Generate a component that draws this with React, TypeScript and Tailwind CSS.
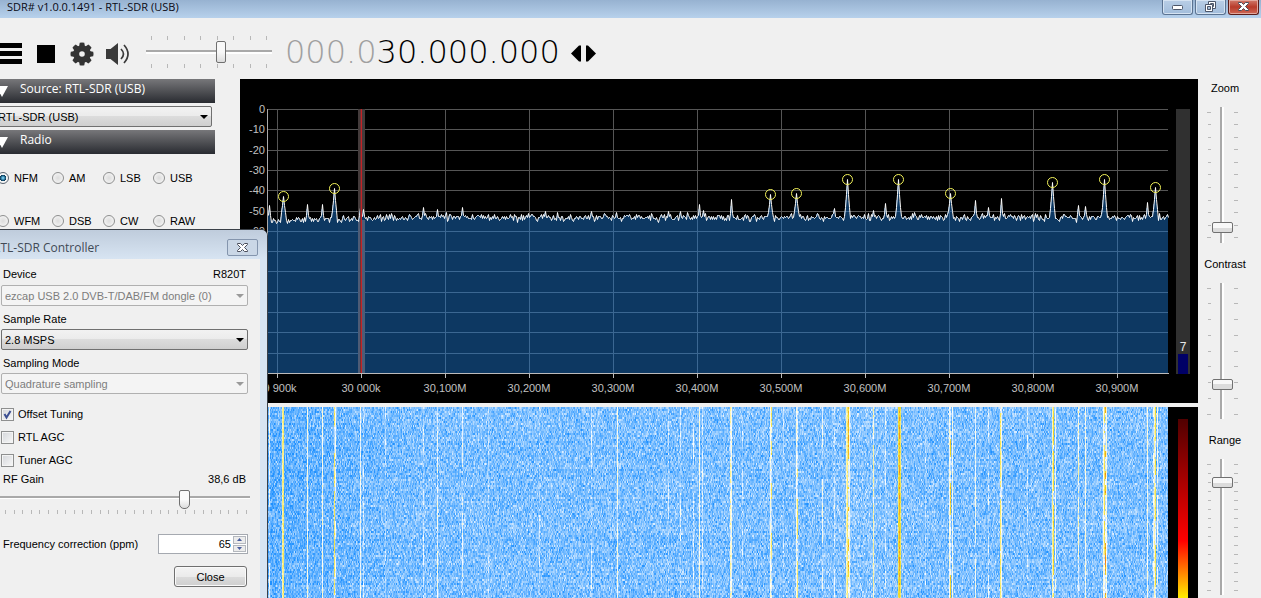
import { useLayoutEffect, useRef, useState } from 'react';
import type { ReactNode, RefObject } from 'react';

const UI = "font-['Liberation_Sans',Arial,sans-serif] text-[11px] leading-[14px]";

const PLOT_LEFT = 28;
const PLOT_RIGHT = 30;
const PLOT_SPAN = 900;
const PLOT_TOP = 30;
const PLOT_BOTTOM = 294;

// x offset inside the plot, y of the tip, whether the peak is marked
const PEAKS: [number, number, boolean][] = [
  [1, 126, false], [15, 117, true], [39, 125, false], [54, 125, false], [66, 109, true],
  [92, 128, false], [95, 130, false], [155, 128, false], [169, 130, false], [194, 128, false],
  [277, 132, false], [323, 132, false], [348, 133, false], [400, 132, false], [412, 132, false],
  [431, 125, false], [435, 131, false], [463, 120, false], [502, 115, true], [528, 114, true],
  [566, 129, false], [579, 100, true], [605, 131, false], [617, 124, false], [630, 100, true],
  [682, 114, true], [707, 121, false], [720, 128, false], [733, 119, false], [784, 103, true],
  [810, 126, false], [817, 127, false], [836, 100, true], [879, 123, false], [887, 108, true],
];

const FREQUENCIES = [
  '29 900k', '30 000k', '30,100M', '30,200M', '30,300M', '30,400M',
  '30,500M', '30,600M', '30,700M', '30,800M', '30,900M',
];

// x offset, strength (1 = white, 2 = yellow, 3 = red), share of rows in which it shows
const CARRIERS: [number, number, number][] = [
  [1, 0.95, 0.8], [14, 1.4, 1], [15, 1.65, 1], [39, 1.05, 1], [54, 1.05, 1], [66, 1.7, 0.75],
  [67, 1, 0.6], [92, 1, 0.85], [95, 0.8, 0.6], [117, 0.75, 0.3], [155, 0.85, 0.6],
  [169, 1.05, 0.6], [194, 0.95, 0.7], [220, 0.75, 0.25], [271, 0.85, 0.4], [323, 0.85, 0.4],
  [349, 1.05, 0.95], [400, 0.85, 0.4], [412, 0.85, 0.4], [425, 0.85, 0.4], [431, 1.05, 1],
  [434, 0.85, 0.75], [462, 1.3, 0.6], [463, 1.05, 1], [474, 0.8, 0.35], [502, 1.05, 1],
  [503, 1.7, 0.45], [515, 0.8, 0.3], [528, 1.05, 1], [529, 1.65, 0.55], [554, 1, 0.65],
  [566, 0.85, 0.45], [578, 1.3, 1], [579, 1.6, 1], [580, 2.1, 0.5], [581, 1.05, 1],
  [605, 1.35, 0.8], [617, 0.85, 0.5], [630, 1.85, 1], [631, 2.15, 1], [632, 1.75, 1],
  [657, 0.8, 0.3], [681, 1.05, 1], [682, 2, 0.5], [684, 1.05, 0.9], [707, 1, 0.9],
  [720, 0.85, 0.35], [732, 1.65, 0.7], [733, 1.05, 0.8], [759, 0.85, 0.35], [784, 1.35, 1],
  [785, 1.9, 0.8], [787, 1, 0.9], [810, 1.2, 0.75], [817, 1.05, 1], [835, 1.1, 1],
  [836, 1.8, 0.7], [837, 2.2, 0.5], [838, 1.1, 1], [879, 1.05, 1], [885, 0.95, 0.5],
  [886, 1.3, 0.9], [887, 1.8, 0.6], [889, 1, 0.9],
];

function createRandom(seed: number) {
  let s = seed;
  return () => {
    s = (s + 0x6d2b79f5) | 0;
    let t = Math.imul(s ^ (s >>> 15), 1 | s);
    t = (t + Math.imul(t ^ (t >>> 7), 61 | t)) ^ t;
    return ((t ^ (t >>> 14)) >>> 0) / 4294967296;
  };
}

function useSize(ref: RefObject<HTMLDivElement | null>) {
  const [size, setSize] = useState({ width: 0, height: 0 });
  useLayoutEffect(() => {
    const el = ref.current;
    if (!el) return;
    const update = () => setSize({ width: el.clientWidth, height: el.clientHeight });
    update();
    const observer = new ResizeObserver(update);
    observer.observe(el);
    return () => observer.disconnect();
  }, [ref]);
  return size;
}

const TRACE: number[] = (() => {
  const random = createRandom(11);
  const ys: number[] = [];
  for (let i = 0; i <= PLOT_SPAN; i++) {
    const base = i < 24 ? 142 : i < 95 ? 140 : i < 150 ? 139 : 138;
    ys.push(Math.round(base + (random() + random() + random() - 1.5) * 3.6));
  }
  for (const [x, tip, marked] of PEAKS) {
    const depth = 140 - tip;
    const shape = marked ? [1, 0.62, 0.3] : [1, 0.3];
    shape.forEach((share, d) => {
      for (const at of [x - d, x + d]) {
        if (at >= 0 && at <= PLOT_SPAN) ys[at] = Math.min(ys[at], Math.round(140 - depth * share));
      }
    });
  }
  return ys;
})();

function Spectrum() {
  const ref = useRef<HTMLDivElement>(null);
  const { width } = useSize(ref);
  const right = Math.max(width - PLOT_RIGHT, PLOT_LEFT);
  const scale = (right - PLOT_LEFT) / PLOT_SPAN;
  const px = (x: number) => Math.round(PLOT_LEFT + x * scale);
  const points = TRACE.map((y, i) => `${px(i)},${y}`).join(' ');
  const area = `${PLOT_LEFT},${PLOT_BOTTOM} ${points} ${right},${PLOT_BOTTOM}`;
  const grid = (
    <>
      {Array.from({ length: 13 }, (_, i) => {
        const y = Math.round(PLOT_TOP + (i * 264) / 13);
        return <rect key={`h${i}`} x={PLOT_LEFT} y={y} width={right - PLOT_LEFT} height="1" />;
      })}
      {FREQUENCIES.map((f, i) => (
        <rect key={f} x={px(9 + i * 84)} y={PLOT_TOP} width="1" height={PLOT_BOTTOM - PLOT_TOP} />
      ))}
    </>
  );
  return (
    <div ref={ref} className="h-[324px] shrink-0 bg-black">
      {width > 0 && (
        <svg width={width} height="324" className="block font-['Liberation_Sans',Arial,sans-serif] text-[11px]">
          <defs>
            <clipPath id="signal">
              <polygon points={area} />
            </clipPath>
          </defs>
          <g shapeRendering="crispEdges">
            <g fill="#555">{grid}</g>
            <rect x={px(90)} y={PLOT_TOP} width="7" height={PLOT_BOTTOM - PLOT_TOP} fill="#433b3b" />
            <polygon points={area} fill="#0d3862" />
            <g fill="#3b6792" clipPath="url(#signal)">{grid}</g>
            <rect x={px(90)} y="141" width="7" height={PLOT_BOTTOM - 141} fill="#4d5c76" />
            <rect x={PLOT_LEFT - 1} y={PLOT_TOP} width="1" height={PLOT_BOTTOM - PLOT_TOP} fill="#aaa" />
            <rect x={PLOT_LEFT - 1} y={PLOT_BOTTOM} width={right - PLOT_LEFT + 2} height="1" fill="#bbb" />
            {FREQUENCIES.map((f, i) => (
              <rect key={f} x={px(9 + i * 84)} y={PLOT_BOTTOM} width="1" height="5" fill="#bbb" />
            ))}
          </g>
          <polyline points={points} fill="none" stroke="#fff" strokeWidth="1" transform="translate(0.5 0.5)" />
          <rect x={px(92)} y={PLOT_TOP} width="1" height={PLOT_BOTTOM - PLOT_TOP} fill="#6e3335" />
          <rect x={px(93)} y={PLOT_TOP} width="1" height={PLOT_BOTTOM - PLOT_TOP} fill="#c42226" />
          {PEAKS.filter((p) => p[2]).map(([x, y]) => (
            <circle key={x} cx={px(x) + 0.5} cy={y + 0.5} r="5" fill="none" stroke="#f3f35a" strokeWidth="1" />
          ))}
          <g fill="#c0c0c0" textAnchor="end">
            {[0, -10, -20, -30, -40, -50, -60].map((v, i) => (
              <text key={v} x="25" y={Math.round(34 + (i * 264) / 13)}>{v}</text>
            ))}
          </g>
          <g fill="#c0c0c0" textAnchor="middle">
            {FREQUENCIES.map((f, i) => (
              <text key={f} x={px(9 + i * 84)} y="313">{f}</text>
            ))}
          </g>
          <rect x={width - 22} y={PLOT_TOP} width="14" height="265" fill="#303030" />
          <rect x={width - 20} y="275" width="10" height="20" fill="#000066" />
          <text x={width - 15} y="272" fill="#e8e8e8" textAnchor="middle" className="text-[12px]">7</text>
        </svg>
      )}
    </div>
  );
}

function levelColor(v: number): [number, number, number] {
  if (v < 1) {
    const t = Math.max(v, 0);
    return [30 + 225 * t, 144 + 111 * t, 255];
  }
  if (v < 2) {
    const t = v - 1;
    return [255 - 16 * t, 255 - 35 * t, 245 - 205 * t];
  }
  const t = Math.min(v - 2, 1);
  return [239, 220 - 220 * t, 40 - 40 * t];
}

function Waterfall() {
  const ref = useRef<HTMLDivElement>(null);
  const canvasRef = useRef<HTMLCanvasElement>(null);
  const { width, height } = useSize(ref);

  useLayoutEffect(() => {
    const ctx = canvasRef.current?.getContext('2d');
    if (!ctx || !width || !height) return;
    const random = createRandom(5);
    const image = ctx.createImageData(width, height);
    const carriers = new Map<number, { level: number; share: number; on: boolean; left: number }>();
    for (const [x, level, share] of CARRIERS) {
      carriers.set(Math.round((x * width) / PLOT_SPAN), { level, share, on: true, left: 0 });
    }
    for (let row = 0; row < height; row += 2) {
      const shift = (random() - 0.5) * 0.09;
      for (let x = 0; x < width; x++) {
        const u = x / width;
        const trend = 0.28 + 0.14 * Math.min(u * 6, 1) + 0.05 * Math.exp(-(((u - 0.66) / 0.04) ** 2));
        let v = trend + shift + (random() + random() + random() - 1.5) * 0.33;
        const c = carriers.get(x);
        if (c) {
          if (c.left <= 0) {
            c.on = random() < c.share;
            c.left = 1 + Math.floor(random() * 9);
          }
          c.left--;
          if (c.on) v = c.level + (random() - 0.5) * 0.45;
          else v += c.level > 1 ? 0.4 : 0.15;
        }
        const [r, g, b] = levelColor(v);
        for (let y = row; y < Math.min(row + 2, height); y++) {
          const o = (y * width + x) * 4;
          image.data[o] = r;
          image.data[o + 1] = g;
          image.data[o + 2] = b;
          image.data[o + 3] = 255;
        }
      }
    }
    ctx.putImageData(image, 0, 0);
  }, [width, height]);

  return (
    <div className="flex min-h-0 flex-1 bg-black pl-7">
      <div ref={ref} className="min-w-0 flex-1 overflow-hidden">
        <canvas ref={canvasRef} width={width} height={height} className="block" />
      </div>
      <div className="flex w-[30px] justify-center pt-3">
        <div className="h-full w-[10px] bg-[linear-gradient(#500000,#ff0000_68%,#ffee00)]" />
      </div>
    </div>
  );
}

function Ticks({ count, vertical = false, ends = false }: { count: number; vertical?: boolean; ends?: boolean }) {
  return (
    <div aria-hidden className={vertical ? 'flex h-[127px] w-1 flex-col justify-between' : 'flex h-1 justify-between'}>
      {Array.from({ length: count }, (_, i) => (
        <span
          key={i}
          className={
            vertical
              ? `h-px bg-[#b8b8b8] ${ends && i > 0 && i < count - 1 ? 'ml-px w-[3px]' : 'w-1'}`
              : 'h-full w-px bg-[#b8b8b8]'
          }
        />
      ))}
    </div>
  );
}

function VerticalSlider({ label, ticks, value }: { label: string; ticks: number; value: number }) {
  return (
    <div className="flex h-[176px] flex-col items-center">
      <label htmlFor={label} className="mb-[11px] block h-4 leading-4">{label}</label>
      <div className="mr-[6px] flex items-center gap-px">
        <Ticks count={ticks} vertical ends />
        <input
          id={label}
          type="range"
          defaultValue={value}
          className="h-[136px] w-[21px] appearance-none bg-[linear-gradient(90deg,#a9a9a9_50%,#fff_50%)] bg-[length:4px_100%] bg-center bg-no-repeat [direction:rtl] [writing-mode:vertical-lr] [&::-webkit-slider-thumb]:h-[11px] [&::-webkit-slider-thumb]:w-[21px] [&::-webkit-slider-thumb]:appearance-none [&::-webkit-slider-thumb]:rounded-[2px] [&::-webkit-slider-thumb]:border [&::-webkit-slider-thumb]:border-[#707070] [&::-webkit-slider-thumb]:bg-[linear-gradient(#f8f8f8_50%,#dcdcdc_50%)]"
        />
        <Ticks count={ticks} vertical />
      </div>
    </div>
  );
}

function TitleBar() {
  return (
    <header className="flex h-[18px] shrink-0 justify-between bg-[linear-gradient(#97b2d1,#b7d1ec)] pr-[2px] pl-[7px]">
      <h1 className="font-['Open_Sans',sans-serif] text-[11px] leading-[14px] text-[#0a0a14]">
        SDR# v1.0.0.1491 - RTL-SDR (USB)
      </h1>
      <div className="flex h-[15px] gap-[2px]">
        <button aria-label="Minimize" className="flex w-[31px] justify-center rounded-b-[3px] border border-t-0 border-[#5b7391] bg-[linear-gradient(#b9cee6,#a2bddb)] pt-[5px] shadow-[inset_0_0_0_1px_#d5e3f2]">
          <svg width="12" height="6"><rect x="0.500" y="0.500" width="10" height="4" rx="1" fill="#fff" stroke="#4c5669" /></svg>
        </button>
        <button aria-label="Restore" className="flex w-[31px] justify-center rounded-b-[3px] border border-t-0 border-[#5b7391] bg-[linear-gradient(#b9cee6,#a2bddb)] shadow-[inset_0_0_0_1px_#d5e3f2]">
          <svg width="13" height="12" fill="none" stroke="#4c5669">
            <path d="M4.500 1.500h7v7h-7z" fill="#fff" />
            <path d="M6.500 3.500h3v3h-3z" />
            <path d="M1.500 4.500h7v7h-7z" fill="#fff" />
            <path d="M3.500 6.500h3v3h-3z" fill="#a9bfd8" />
          </svg>
        </button>
        <button aria-label="Close window" className="flex w-[31px] justify-center rounded-b-[3px] border border-t-0 border-[#5c1c18] bg-[linear-gradient(#d27b6c,#b83a2a_50%,#cf6a58)] pt-px shadow-[inset_0_0_0_1px_#e2a79d]">
          <CrossIcon />
        </button>
      </div>
    </header>
  );
}

function CrossIcon() {
  return (
    <svg width="13" height="11" viewBox="0 0 13 11">
      <path
        d="M1.500 1.500h3l2 2 2-2h3v1l-3 3 3 3v1h-3l-2-2-2 2h-3v-1l3-3-3-3z"
        fill="#fff"
        stroke="#4b4f5c"
      />
    </svg>
  );
}

function GearIcon() {
  return (
    <svg width="24" height="24" viewBox="-12 -12 24 24" fill="#333">
      {[0, 45, 90, 135, 180, 225, 270, 315].map((a) => (
        <path key={a} d="M-3-7L-2.300-11.200Q0-11.900 2.300-11.200L3-7z" transform={`rotate(${a})`} />
      ))}
      <path fillRule="evenodd" d="M0-8.800a8.800 8.800 0 1 0 0 17.600a8.800 8.800 0 1 0 0-17.600zM0-2.800a2.800 2.800 0 1 1 0 5.600a2.800 2.800 0 1 1 0-5.600z" />
    </svg>
  );
}

function SpeakerIcon() {
  return (
    <svg width="26" height="24" viewBox="0 0 26 24" fill="none" stroke="#3a3a3a">
      <path d="M0 7h4.500L12 1v22l-7.500-6H0z" fill="#3a3a3a" stroke="none" />
      <path d="M15 7q5 5 0 10" strokeWidth="1.700" />
      <path d="M18 3q8 9 0 18" strokeWidth="1.700" />
    </svg>
  );
}

function Toolbar() {
  return (
    <div className="flex h-[61px] shrink-0 items-center pt-[10px]">
      <button aria-label="Menu" className="mr-[15px]">
        <svg width="22" height="21" className="block"><path d="M0 0h22v5H0zM0 8h22v5H0zM0 16h22v5H0z" /></svg>
      </button>
      <button aria-label="Stop" className="mr-[15px] size-[18px] bg-black" />
      <button aria-label="Settings" className="mr-3"><GearIcon /></button>
      <button aria-label="Mute" className="mr-[14px]"><SpeakerIcon /></button>
      <div className="mb-1 w-[126px]">
        <div className="px-[5px]"><Ticks count={8} /></div>
        <input
          type="range"
          aria-label="Volume"
          defaultValue={60}
          className="my-px block h-[22px] w-full appearance-none bg-[linear-gradient(#a9a9a9_50%,#fff_50%)] bg-[length:100%_4px] bg-center bg-no-repeat [&::-webkit-slider-thumb]:h-[22px] [&::-webkit-slider-thumb]:w-[10px] [&::-webkit-slider-thumb]:appearance-none [&::-webkit-slider-thumb]:rounded-[2px] [&::-webkit-slider-thumb]:border [&::-webkit-slider-thumb]:border-[#707070] [&::-webkit-slider-thumb]:bg-[linear-gradient(#f8f8f8_50%,#dcdcdc)]"
        />
        <div className="px-[5px]"><Ticks count={8} /></div>
      </div>
      <output aria-label="Frequency" className="ml-[13px] mb-1 font-['DejaVu_Sans',sans-serif] text-[32px] leading-8 font-extralight whitespace-nowrap text-black">
        <span className="text-[#a0a0a0]">000.0</span>30.000.000
      </output>
      <div className="ml-[11px] flex gap-[3px]">
        <button aria-label="Tune down"><svg width="11" height="17"><path d="M0 8.500L8 0.500H10V16.500H8z" /></svg></button>
        <button aria-label="Tune up"><svg width="11" height="17"><path d="M11 8.500L3 0.500H1V16.500H3z" /></svg></button>
      </div>
    </div>
  );
}

function Combo({ id, label, value, disabled = false, tight = false }: { id: string; label?: string; value: string; disabled?: boolean; tight?: boolean }) {
  return (
    <div className="relative">
      <select
        id={id}
        aria-label={label}
        disabled={disabled}
        className={`block h-[21px] w-full appearance-none rounded-[2px] border ${tight ? 'pl-[5px]' : 'pl-[3px]'} ${
          disabled
            ? 'border-[#b0b0b0] bg-[#f4f4f4] text-[#7d7d7d] opacity-100'
            : 'border-[#707070] bg-[linear-gradient(#f2f2f2,#ebebeb_50%,#dcdcdc_50%,#cfcfcf)] text-black'
        }`}
      >
        <option>{value}</option>
      </select>
      <svg width="8" height="4" className="pointer-events-none absolute top-[9px] right-1">
        <path d="M0 0h8L4 4z" fill={disabled ? '#9a9a9a' : '#000'} />
      </svg>
    </div>
  );
}

function SectionHeader({ children }: { children: ReactNode }) {
  return (
    <button className="flex h-6 w-full items-start bg-[linear-gradient(#77777a,#505155_50%,#292b31)] text-left font-['Open_Sans',sans-serif] text-[12px] leading-5 text-white">
      <svg width="12" height="11" className="mt-[7px] mr-3 ml-1"><path d="M0 0h12L6 11z" fill="#fff" /></svg>
      {children}
    </button>
  );
}

const MODES = ['NFM', 'AM', 'LSB', 'USB', 'WFM', 'DSB', 'CW', 'RAW'];

function Sidebar() {
  return (
    <aside className="-ml-2 w-[223px] shrink-0">
      <SectionHeader>Source: RTL-SDR (USB)</SectionHeader>
      <div className="pt-[3px] pr-[3px] pb-[3px]">
        <Combo id="source" label="Source" value="RTL-SDR (USB)" tight />
      </div>
      <SectionHeader>Radio</SectionHeader>
      <div className="grid grid-cols-[55px_51px_50px_auto] gap-y-[29px] pt-[17px] pl-[5px]">
        {MODES.map((mode) => (
          <label key={mode} className="flex items-center gap-[5px]">
            <input
              type="radio"
              name="mode"
              defaultChecked={mode === 'NFM'}
              className="size-3 appearance-none rounded-full border border-[#8e8f8f] bg-[radial-gradient(#dcdcdc,#fafafa)] checked:border-[#5a6470] checked:bg-[radial-gradient(circle,#7fd4f5_5%,#14567c_35%,#0d3752_42%,#f4f4f4_50%)]"
            />
            {mode}
          </label>
        ))}
      </div>
    </aside>
  );
}

function ControllerDialog() {
  return (
    <section
      role="dialog"
      aria-labelledby="dialog-title"
      className="absolute top-[229px] -left-2 w-[276px] overflow-hidden rounded-t-[7px] border border-[#3a4048] bg-[#d7e4f2]"
    >
      <div className="flex h-[29px] items-start justify-between bg-[linear-gradient(#bfccdc,#d7e4f2)] pt-[9px] pr-[9px]">
        <h2 id="dialog-title" className="font-['Open_Sans',sans-serif] text-[12px] leading-[18px] text-[#414a56]">
          RTL-SDR Controller
        </h2>
        <button aria-label="Close dialog" className="flex h-[17px] w-[31px] items-center justify-center rounded-[2px] border border-[#8495ad] bg-[#cad7e6]">
          <CrossIcon />
        </button>
      </div>
      <div className="mr-[7px] ml-[7px] bg-[#f0f0f0] pt-2 pr-3 pb-10">
        <div className="flex justify-between pr-[2px] pl-[3px]">
          <label htmlFor="device">Device</label>
          <span>R820T</span>
        </div>
        <div className="pt-1 pb-[6px] pl-px"><Combo id="device" value="ezcap USB 2.0 DVB-T/DAB/FM dongle (0)" disabled /></div>
        <label htmlFor="rate" className="block pl-[3px]">Sample Rate</label>
        <div className="pt-[3px] pb-[6px] pl-px"><Combo id="rate" value="2.8 MSPS" /></div>
        <label htmlFor="sampling" className="block pl-[3px]">Sampling Mode</label>
        <div className="pt-[3px] pb-[13px] pl-px"><Combo id="sampling" value="Quadrature sampling" disabled /></div>
        <div className="flex flex-col gap-[9px] pl-px">
          {['Offset Tuning', 'RTL AGC', 'Tuner AGC'].map((name, i) => (
            <label key={name} className="flex items-center gap-1">
              <span className="grid">
                <input
                  type="checkbox"
                  defaultChecked={i === 0}
                  className="peer col-start-1 row-start-1 size-[13px] appearance-none border border-[#8e8f8f] bg-[linear-gradient(135deg,#d4d6da,#f8f8f8)] shadow-[inset_0_0_0_1px_#f4f4f4]"
                />
                <svg width="13" height="13" className="pointer-events-none invisible col-start-1 row-start-1 peer-checked:visible">
                  <path d="M3.500 6L5.500 9.500L9.500 3" fill="none" stroke="#3c4f92" strokeWidth="2" />
                </svg>
              </span>
              {name}
            </label>
          ))}
        </div>
        <div className="flex justify-between pt-[5px] pr-[2px] pl-[3px]">
          <label htmlFor="gain">RF Gain</label>
          <span>38,6 dB</span>
        </div>
        <input
          id="gain"
          type="range"
          defaultValue={75}
          className="mt-1 block h-[19px] w-[250px] appearance-none bg-[linear-gradient(#a9a9a9_50%,#fff_50%)] bg-[length:100%_3px] bg-[position:0_6px] bg-no-repeat [&::-webkit-slider-thumb]:h-[19px] [&::-webkit-slider-thumb]:w-[11px] [&::-webkit-slider-thumb]:appearance-none [&::-webkit-slider-thumb]:rounded-t-[2px] [&::-webkit-slider-thumb]:rounded-b-[5px] [&::-webkit-slider-thumb]:border [&::-webkit-slider-thumb]:border-[#707070] [&::-webkit-slider-thumb]:bg-[linear-gradient(#fafafa_50%,#dcdcdc)]"
        />
        <div className="pt-px pr-px pl-[5px]"><Ticks count={29} /></div>
        <div className="mt-5 flex items-center justify-between">
          <label htmlFor="ppm" className="pl-[3px]">Frequency correction (ppm)</label>
          <div className="flex h-5 w-[90px] border border-[#a5a9b0] bg-white p-px">
            <input
              id="ppm"
              type="number"
              defaultValue={65}
              className="min-w-0 flex-1 [appearance:textfield] bg-transparent pr-[2px] text-right [&::-webkit-inner-spin-button]:appearance-none"
            />
            <div className="flex w-[13px] flex-col gap-px">
              <button aria-label="Increase" className="flex flex-1 items-center justify-center border border-[#b4b8be] bg-[#ececec]">
                <svg width="5" height="3"><path d="M0 3h5L2.500 0z" fill="#4a5f9e" /></svg>
              </button>
              <button aria-label="Decrease" className="flex flex-1 items-center justify-center border border-[#b4b8be] bg-[#ececec]">
                <svg width="5" height="3"><path d="M0 0h5L2.500 3z" fill="#4a5f9e" /></svg>
              </button>
            </div>
          </div>
        </div>
        <div className="flex justify-end pt-3 pr-px">
          <button className="h-[21px] w-[73px] rounded-[3px] border border-[#707070] bg-[linear-gradient(#f4f4f4,#ebebeb_50%,#dcdcdc_50%,#cfcfcf)] leading-[18px] shadow-[inset_0_0_0_1px_#fafafa]">
            Close
          </button>
        </div>
      </div>
    </section>
  );
}

export default function App() {
  return (
    <div className={`relative flex h-screen flex-col overflow-hidden bg-[#f0f0f0] text-black ${UI}`}>
      <TitleBar />
      <Toolbar />
      <main className="flex min-h-0 flex-1">
        <Sidebar />
        <div className="ml-[25px] flex min-w-0 flex-1 flex-col gap-1">
          <Spectrum />
          <Waterfall />
        </div>
        <aside className="w-[63px] shrink-0 overflow-hidden pt-px pr-[9px]">
          <VerticalSlider label="Zoom" ticks={11} value={8} />
          <VerticalSlider label="Contrast" ticks={9} value={23} />
          <VerticalSlider label="Range" ticks={15} value={86} />
        </aside>
      </main>
      <ControllerDialog />
    </div>
  );
}
